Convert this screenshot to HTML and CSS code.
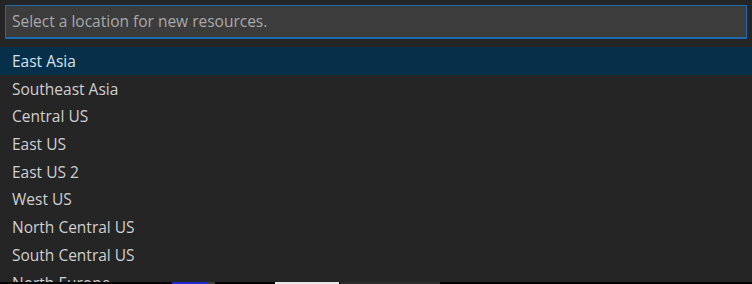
FILE: index.html
```html
<!DOCTYPE html>
<html>
<head>
<meta charset="utf-8">
<link rel="stylesheet" href="styles.css">
</head>
<body>
<div class="picker">
  <div class="input-wrap">
    <input class="input" type="text" placeholder="Select a location for new resources.">
  </div>
  <ul class="list">
    <li class="item selected">East Asia</li>
    <li class="item">Southeast Asia</li>
    <li class="item">Central US</li>
    <li class="item">East US</li>
    <li class="item">East US 2</li>
    <li class="item">West US</li>
    <li class="item">North Central US</li>
    <li class="item">South Central US</li>
    <li class="item">North Europe</li>
    <li class="item">West Europe</li>
  </ul>
  <div class="taskbar">
    <span class="tb tb-a"></span>
    <span class="tb tb-b"></span>
    <span class="tb tb-c"></span>
    <span class="tb tb-d"></span>
  </div>
</div>
</body>
</html>
```

FILE: styles.css
```css
html, body {
  margin: 0;
  padding: 0;
  background: #252526;
}
.picker {
  width: 752px;
  height: 284px;
  display: flex;
  flex-direction: column;
  background: #252526;
  font-family: "Open Sans", "Noto Sans", sans-serif;
  overflow: hidden;
}
.input-wrap {
  padding: 5px 5px 0 5px;
}
.input {
  box-sizing: border-box;
  width: 742px;
  height: 34px;
  margin: 0;
  padding: 0 0 1px 6px;
  border: 1px solid #1c6bb0;
  border-bottom-width: 2px;
  background: #3c3c3c;
  color: #cccccc;
  font-family: "Open Sans", "Noto Sans", sans-serif;
  font-size: 15.5px;
  outline: none;
}
.input::placeholder {
  color: #a9a9a9;
}
.list {
  list-style: none;
  margin: 8px 0 0 0;
  padding: 0;
  flex: 1;
  overflow: hidden;
}
.item {
  height: 27.7px;
  line-height: 29px;
  padding-left: 12px;
  color: #d0d0d0;
  font-size: 15.5px;
  white-space: nowrap;
  overflow: hidden;
}
.item.selected {
  background: #062f4a;
  color: #d6e2ec;
}
.taskbar {
  height: 2px;
  background: #050507;
  position: relative;
  flex: none;
}
.tb {
  position: absolute;
  top: 0;
  height: 2px;
}
.tb-a { left: 172px; width: 35px; background: #1b2bd0; }
.tb-b { left: 207px; width: 8px; background: #3a3a3a; }
.tb-c { left: 275px; width: 64px; background: #e8e8e8; }
.tb-d { left: 340px; width: 100px; background: #2b2b2b; }
```
